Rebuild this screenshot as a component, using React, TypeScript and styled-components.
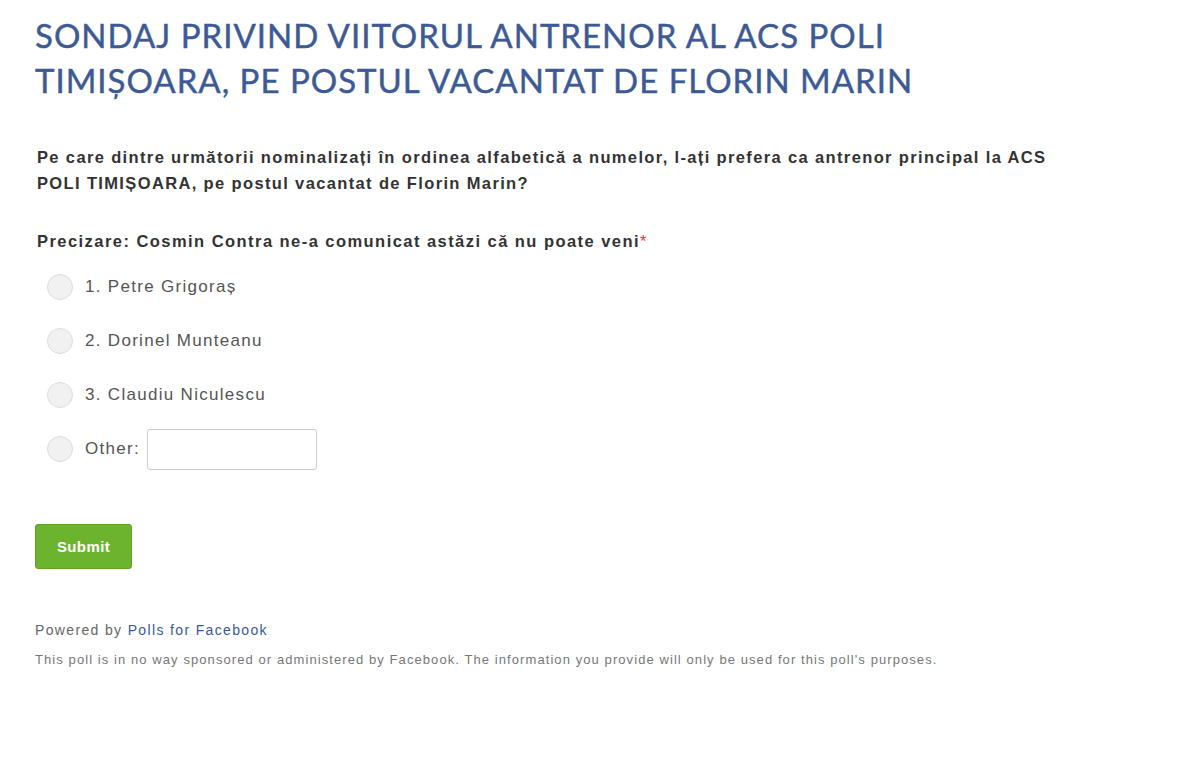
import React from "react";
import styled, { createGlobalStyle } from "styled-components";

const Global = createGlobalStyle`
  html, body { margin: 0; padding: 0; background: #ffffff; }
  body { font-family: "Liberation Sans", Arial, sans-serif; }
`;

const Page = styled.div`
  padding: 13px 0 0 35px;
  width: 1130px;
`;

const Title = styled.h1`
  margin: 0;
  font-family: Lato, "Open Sans", sans-serif;
  font-weight: 400;
  font-size: 33px;
  line-height: 45px;
  color: #3d5a94;
  letter-spacing: 1px;
  -webkit-text-stroke: 0.45px #3d5a94;
`;

const Question = styled.p`
  margin: 41px 0 0 2px;
  font-weight: 700;
  font-size: 16.5px;
  line-height: 26px;
  color: #333;
  letter-spacing: 1.36px;
  width: 1030px;
`;

const Note = styled.p`
  margin: 34px 0 0 2px;
  font-weight: 700;
  font-size: 16.5px;
  line-height: 22px;
  color: #333;
  letter-spacing: 1.45px;
`;

const Req = styled.span`
  color: #c44;
  font-weight: 400;
`;

const Options = styled.div`
  display: flex;
  flex-direction: column;
  margin: 8px 0 0 12px;
`;

const Option = styled.label`
  display: flex;
  align-items: center;
  gap: 12px;
  height: 54px;
  font-size: 17px;
  letter-spacing: 1.3px;
  color: #555;
`;

const Radio = styled.span`
  width: 26px;
  height: 26px;
  border-radius: 50%;
  border: 1px solid #dcdcdc;
  background: #f1f1f1;
  box-sizing: border-box;
  flex-shrink: 0;
`;

const TextBox = styled.input`
  width: 170px;
  height: 41px;
  box-sizing: border-box;
  border: 1px solid #ccc;
  border-radius: 3px;
  margin-left: -5px;
`;

const Submit = styled.button`
  margin-top: 48px;
  width: 97px;
  height: 45px;
  background: #6cb42e;
  border: 1px solid #5ea325;
  border-radius: 3px;
  color: #fff;
  font-family: "Liberation Sans", Arial, sans-serif;
  font-weight: 700;
  font-size: 15px;
  letter-spacing: 0.4px;
`;

const Powered = styled.div`
  margin-top: 53px;
  font-size: 14px;
  color: #666;
  letter-spacing: 1.35px;
`;

const Link = styled.a`
  color: #3b5998;
  text-decoration: none;
`;

const Disclaimer = styled.div`
  margin-top: 14px;
  font-size: 13px;
  color: #777;
  letter-spacing: 1.08px;
`;

export default function App() {
  return (
    <>
      <Global />
      <Page>
        <Title>
          SONDAJ PRIVIND VIITORUL ANTRENOR AL ACS POLI
          <br />
          TIMIȘOARA, PE POSTUL VACANTAT DE FLORIN MARIN
        </Title>
        <Question>
          Pe care dintre următorii nominalizați în ordinea alfabetică a numelor, l-ați prefera ca antrenor principal la ACS POLI TIMIȘOARA, pe postul vacantat de Florin Marin?
        </Question>
        <Note>
          Precizare: Cosmin Contra ne-a comunicat astăzi că nu poate veni<Req>*</Req>
        </Note>
        <Options>
          <Option><Radio />1. Petre Grigoraș</Option>
          <Option><Radio />2. Dorinel Munteanu</Option>
          <Option><Radio />3. Claudiu Niculescu</Option>
          <Option><Radio />Other:<TextBox type="text" /></Option>
        </Options>
        <Submit>Submit</Submit>
        <Powered>
          Powered by <Link href="#">Polls for Facebook</Link>
        </Powered>
        <Disclaimer>
          This poll is in no way sponsored or administered by Facebook. The information you provide will only be used for this poll's purposes.
        </Disclaimer>
      </Page>
    </>
  );
}
